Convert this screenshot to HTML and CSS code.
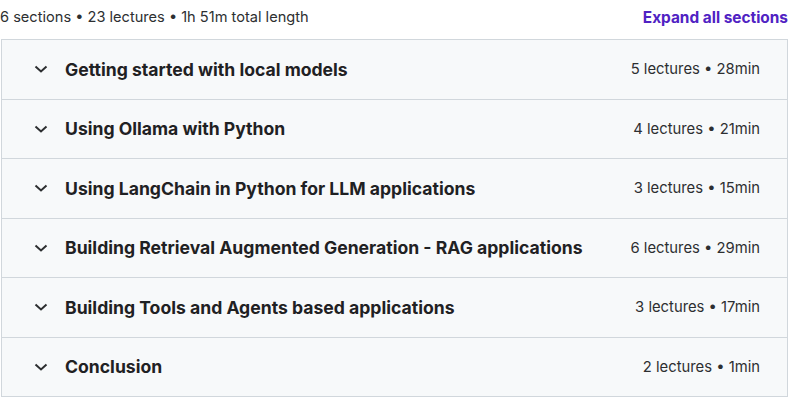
FILE: index.html
```html
<!DOCTYPE html>
<html lang="en">
  <head>
    <meta charset="UTF-8" />
    <meta name="viewport" content="width=device-width, initial-scale=1.0" />
    <title>Course content</title>
    <link rel="stylesheet" href="styles.css">
  </head>
  <body>
    <div class="curriculum">
      <div class="summary">
        <span>6 sections • 23 lectures • 1h 51m total length</span>
        <button class="expand">Expand all sections</button>
      </div>

      <div class="sections">
        <div class="section">
          <svg class="chevron" viewBox="0 0 14 8"><path d="M1.5 1.5 7 6.5l5.5-5" /></svg>
          <span class="title">Getting started with local models</span>
          <span class="meta">5 lectures • 28min</span>
        </div>
        <div class="section">
          <svg class="chevron" viewBox="0 0 14 8"><path d="M1.5 1.5 7 6.5l5.5-5" /></svg>
          <span class="title">Using Ollama with Python</span>
          <span class="meta">4 lectures • 21min</span>
        </div>
        <div class="section">
          <svg class="chevron" viewBox="0 0 14 8"><path d="M1.5 1.5 7 6.5l5.5-5" /></svg>
          <span class="title">Using LangChain in Python for LLM applications</span>
          <span class="meta">3 lectures • 15min</span>
        </div>
        <div class="section">
          <svg class="chevron" viewBox="0 0 14 8"><path d="M1.5 1.5 7 6.5l5.5-5" /></svg>
          <span class="title">Building Retrieval Augmented Generation - RAG applications</span>
          <span class="meta">6 lectures • 29min</span>
        </div>
        <div class="section">
          <svg class="chevron" viewBox="0 0 14 8"><path d="M1.5 1.5 7 6.5l5.5-5" /></svg>
          <span class="title">Building Tools and Agents based applications</span>
          <span class="meta">3 lectures • 17min</span>
        </div>
        <div class="section">
          <svg class="chevron" viewBox="0 0 14 8"><path d="M1.5 1.5 7 6.5l5.5-5" /></svg>
          <span class="title">Conclusion</span>
          <span class="meta">2 lectures • 1min</span>
        </div>
      </div>
    </div>
  </body>
</html>
```

FILE: styles.css
```css
body {
  margin: 0;
  background-color: #ffffff;
  color: #2d2f31;
  font-family: Inter, "Noto Sans", sans-serif;
}

.curriculum {
  width: 788px;
}

.summary {
  display: flex;
  justify-content: space-between;
  align-items: center;
  height: 34px;
  font-size: 14.6px;
  color: #2d2f31;
}

.expand {
  background: none;
  border: none;
  padding: 0;
  font-family: inherit;
  font-size: 15.4px;
  font-weight: 700;
  color: #5022c3;
  cursor: pointer;
}

.sections {
  margin: 5px 0 0 1px;
  border: 1px solid #d1d7dc;
  width: 785px;
}

.section {
  display: flex;
  align-items: center;
  height: 58.5px;
  padding: 0 27px 0 32px;
  background-color: #f7f9fa;
  border-top: 1px solid #d1d7dc;
}

.section:first-child {
  border-top: none;
}

.chevron {
  width: 14px;
  height: 8px;
  fill: none;
  stroke: #2d2f31;
  stroke-width: 2;
  margin-right: 17px;
}

.title {
  flex: 1;
  font-size: 17.6px;
  font-weight: 700;
  color: #1f2123;
}

.meta {
  font-size: 14.8px;
  color: #2d2f31;
}
```
